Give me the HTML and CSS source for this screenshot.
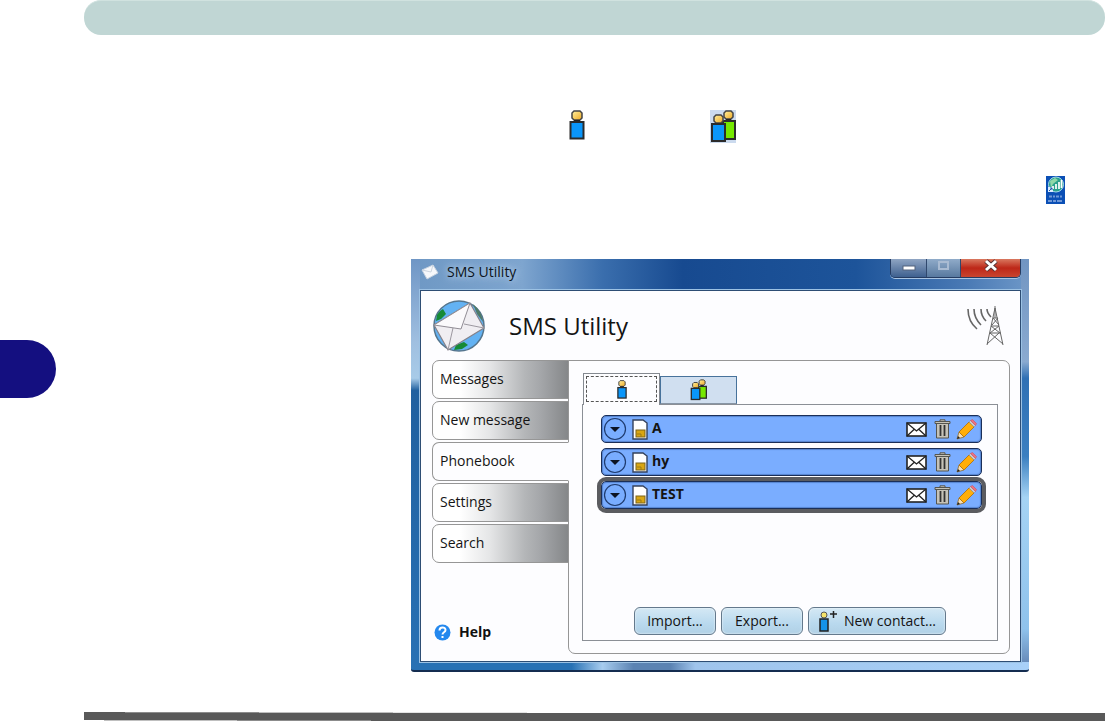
FILE: index.html
```html
<!DOCTYPE html>
<html lang="en">
<head>
<meta charset="utf-8">
<title>SMS Utility</title>
<link rel="stylesheet" href="styles.css">
</head>
<body>
<svg class="defs" aria-hidden="true">
  <defs>
    <linearGradient id="gold" x1="0" y1="0" x2="1" y2="1"><stop offset="0" stop-color="#fff0a0"/><stop offset="1" stop-color="#efa922"/></linearGradient>
    <symbol id="person" viewBox="0 0 16 30">
      <path d="M5 1h6l2 2v5l-2 2H5L3 8V3z" fill="url(#gold)" stroke="#444" stroke-width="1.5"/>
      <path d="M5 10h6v2H5z" fill="#222"/>
      <rect x="1.5" y="12" width="13" height="16.5" fill="#0a96fa" stroke="#2b2b2b" stroke-width="2"/>
    </symbol>
    <symbol id="people" viewBox="0 0 26 33">
      <path d="M16 1h5l2 2v4l-2 2h-5l-2-2V3z" fill="url(#gold)" stroke="#444" stroke-width="1.5"/>
      <path d="M16 9h5v2h-5z" fill="#222"/>
      <rect x="13" y="11" width="12" height="18" fill="#75e800" stroke="#2b2b2b" stroke-width="2"/>
      <path d="M6 5h5l2 2v4l-2 2H6l-2-2V7z" fill="url(#gold)" stroke="#444" stroke-width="1.5"/>
      <rect x="2" y="14" width="13" height="17" fill="#0a96fa" stroke="#2b2b2b" stroke-width="2"/>
    </symbol>
    <symbol id="card" viewBox="0 0 16 21">
      <path d="M1 1h10l4 3v16H1z" fill="#fff" stroke="#34415c" stroke-width="1.4"/>
      <rect x="4" y="11" width="9" height="7" fill="#d9a613" stroke="#7c641c"/>
      <path d="M5 15h4v3" fill="none" stroke="#9c7a16"/>
    </symbol>
    <symbol id="mail" viewBox="0 0 21 15">
      <rect x="1" y="1" width="19" height="13" fill="#fff" stroke="#222" stroke-width="1.6"/>
      <path d="M1 1l9.500 8L20 1M1 14l7-6.500M20 14l-7-6.500" fill="none" stroke="#222" stroke-width="1.300"/>
    </symbol>
    <symbol id="trash" viewBox="0 0 17 20">
      <path d="M2.500 4.500h12V19h-12z" fill="#c6c3b8" stroke="#55554f"/>
      <path d="M1 2.500h15v2H1zM6 .8h5v1.700H6z" fill="#c6c3b8" stroke="#55554f"/>
      <path d="M6.500 6v11M10.500 6v11" stroke="#333" stroke-width="1.800"/>
    </symbol>
    <symbol id="pencil" viewBox="0 0 21 21">
      <path d="M1 20l2-7 5 5z" fill="#f7dfb5" stroke="#8a672c" stroke-width=".8"/>
      <path d="M1 20l1-3 2 2z" fill="#222"/>
      <path d="M3 13L13 3l5 5L8 18z" fill="#ffae0a" stroke="#b37410" stroke-width=".9"/>
      <path d="M13 3l1.500-1.500 5 5L18 8z" fill="#ccc" stroke="#888" stroke-width=".5"/>
      <path d="M14.500 1.500l2-1 4 4-1 2z" fill="#ef7180" stroke="#c95565" stroke-width=".6"/>
    </symbol>
    <symbol id="arrow" viewBox="0 0 24 24">
      <circle cx="12" cy="12" r="10.500" fill="#79adff" stroke="#1f3c70" stroke-width="1.200"/>
      <path d="M7 10h10l-5 5z" fill="#0c1424"/>
    </symbol>
  </defs>
</svg>
<div class="page">
  <aside class="margin"><div class="chapter"></div></aside>
  <main class="content">
    <div class="banner"></div>
    <div class="legend">
      <svg class="one" role="img" aria-label="Contact"><use href="#person"/></svg>
      <svg class="many" role="img" aria-label="Group"><use href="#people"/></svg>
    </div>
    <div class="shortcut">
      <svg width="19" height="28" viewBox="0 0 19 28" role="img" aria-label="Wireless Manager">
        <rect width="19" height="28" fill="#0b4fb5"/>
        <circle cx="10" cy="8.500" r="7.500" fill="#2aa08c" stroke="#a8dcec"/>
        <path d="M4 5l5-3 3 2-5 4-2 4z" fill="#8fd8a8"/>
        <path d="M7 13v-3M10 13V8M13 13V6M15.500 12V4" stroke="#fff" stroke-width="1.700"/>
        <path d="M2 11h5v5H2z" fill="#dcecff"/><path d="M3 15l3-3M4 12h2v2" stroke="#2358a8" fill="none"/>
        <path d="M3 20.500h3m1 0h2m1 0h3m1 0h2M2 25h4m1 0h3m1 0h5" stroke="#6f97d6" stroke-width="2"/>
      </svg>
    </div>
    <section class="window">
      <header class="titlebar">
        <svg width="18" height="16" viewBox="0 0 18 16" aria-hidden="true"><path d="M1 6l11-5 5 8-11 6z" fill="#f6f8fb" stroke="#c5d2e0"/><path d="M1 6l9 2 2-7" fill="none" stroke="#ccd5df"/></svg>
        <span class="caption">SMS Utility</span>
        <div class="controls">
          <button class="ctl" aria-label="Minimize"><svg width="16" height="16" viewBox="0 0 16 16"><rect x="2" y="7" width="12" height="4" fill="#fff" stroke="#53637c"/></svg></button>
          <button class="ctl max" aria-label="Maximize" disabled><svg width="16" height="16" viewBox="0 0 16 16"><rect x="3" y="3" width="9" height="7" fill="none" stroke="#a9bbd2" stroke-width="2"/></svg></button>
          <button class="ctl close" aria-label="Close"><svg width="16" height="16" viewBox="0 0 16 16"><path d="M3 2l10 9M13 2L3 11" stroke="#5b3535" stroke-width="5"/><path d="M3 2l10 9M13 2L3 11" stroke="#fff" stroke-width="3"/></svg></button>
        </div>
      </header>
      <div class="client">
        <div class="brand">
          <svg width="54" height="54" viewBox="0 0 54 54" aria-hidden="true">
            <circle cx="27" cy="27" r="25" fill="#63b2f3" stroke="#55758d" stroke-width="1.500"/>
            <path d="M5 16c2-3 4-5 6-6l3 5-5 5-5 2zM24 46l8-3 4 3-6 4-8 1z" fill="#168a36"/>
            <path d="M41 5c6 5 9 11 10 18l-6-8z" fill="#4f7a68"/>
            <path d="M2 26L38 4l14 25L16 51z" fill="#f0eef2" stroke="#858189" stroke-width="1.200"/>
            <path d="M16 51l5-22M52 29l-20-4" fill="none" stroke="#9c98a0"/>
            <path d="M2 26l27 4L38 4z" fill="#fbfafc" stroke="#918d95"/>
          </svg>
          <h1>SMS Utility</h1>
          <svg width="38" height="40" viewBox="0 0 38 40" fill="none" stroke="#666" aria-hidden="true">
            <path d="M28 2L20 39M28 2l8 37M26 12h5M24 20l8 0M23 27h11M20 38l12-11M36 38L23 27M23 27l9-7M33 27l-9-7M25 19l6-7M32 19l-6-7M28 0v12"/>
            <path d="M1 3c0 8 3 15 9 20M7 3c0 6 2 11 7 16M14 3c0 5 1 8 5 12M20 3c0 3 1 5 4 8" stroke-width="1.600"/>
          </svg>
        </div>
        <div class="body">
          <nav class="side">
            <button class="item">Messages</button>
            <button class="item">New message</button>
            <button class="item current">Phonebook</button>
            <button class="item">Settings</button>
            <button class="item">Search</button>
            <a class="help" href="#help">
              <svg width="17" height="17" viewBox="0 0 17 17" aria-hidden="true"><circle cx="8.500" cy="8.500" r="8" fill="#2488ee"/><path d="M5.500 6.500c0-4 6-4 6-.5 0 2.500-3 2-3 4.500M8.500 12v2" fill="none" stroke="#fff" stroke-width="2"/></svg>
              Help</a>
          </nav>
          <div class="panel">
            <div class="tabs" role="tablist">
              <button class="tab active" role="tab" aria-selected="true" aria-label="Contacts"><svg class="t-one"><use href="#person"/></svg></button>
              <button class="tab" role="tab" aria-selected="false" aria-label="Groups"><svg class="t-many"><use href="#people"/></svg></button>
            </div>
            <div class="sheet">
              <ul class="contacts">
                <li class="row"><button aria-label="Expand A"><svg class="arrow"><use href="#arrow"/></svg></button><svg class="card"><use href="#card"/></svg><span class="name">A</span><button aria-label="Message"><svg class="mail"><use href="#mail"/></svg></button><button aria-label="Delete"><svg class="trash"><use href="#trash"/></svg></button><button aria-label="Edit"><svg class="pencil"><use href="#pencil"/></svg></button></li>
                <li class="row"><button aria-label="Expand hy"><svg class="arrow"><use href="#arrow"/></svg></button><svg class="card"><use href="#card"/></svg><span class="name">hy</span><button aria-label="Message"><svg class="mail"><use href="#mail"/></svg></button><button aria-label="Delete"><svg class="trash"><use href="#trash"/></svg></button><button aria-label="Edit"><svg class="pencil"><use href="#pencil"/></svg></button></li>
                <li class="row selected"><button aria-label="Expand TEST"><svg class="arrow"><use href="#arrow"/></svg></button><svg class="card"><use href="#card"/></svg><span class="name">TEST</span><button aria-label="Message"><svg class="mail"><use href="#mail"/></svg></button><button aria-label="Delete"><svg class="trash"><use href="#trash"/></svg></button><button aria-label="Edit"><svg class="pencil"><use href="#pencil"/></svg></button></li>
              </ul>
              <div class="actions">
                <button class="btn">Import...</button>
                <button class="btn">Export...</button>
                <button class="btn new"><svg width="20" height="22" viewBox="0 0 20 22" aria-hidden="true"><circle cx="6" cy="5" r="3" fill="#f5e36a" stroke="#555"/><rect x="2" y="9" width="8" height="12" fill="#1593e8" stroke="#222" stroke-width="1.500"/><path d="M12 4h7M15.500 1v7" stroke="#222" stroke-width="1.500"/></svg>New contact...</button>
              </div>
            </div>
          </div>
        </div>
      </div>
    </section>
    <svg class="rule" viewBox="0 0 1021 10" preserveAspectRatio="none" aria-hidden="true">
      <path d="M0 0h41v2H0zM0 1h1021v7H0z" fill="#595959"/>
      <path d="M41 0h134v1H41zM153 8h134v1H153z" fill="#8c8c8c"/>
      <path d="M175 0h134v1H175zM20 8h133v1H20z" fill="#bfbfbf"/>
      <path d="M309 0h134v1H309zM421 9h600v1H421z" fill="#e4e4e4"/>
      <path d="M287 8h734v1H287z" fill="#595959"/>
    </svg>
  </main>
</div>
</body>
</html>
```
FILE: styles.css
```css
* { box-sizing: border-box; }
body { margin: 0; background: #fff; color: #141414; font: 14px/20px "Open Sans", "Noto Sans", sans-serif; }
button { font: inherit; color: inherit; margin: 0; padding: 0; border: 0; background: none; }
svg { display: block; flex: none; }
.defs { position: absolute; width: 0; height: 0; }

.page { display: flex; min-height: 100vh; }
.margin { width: 84px; flex: none; padding-top: 340px; }
.chapter { width: 56px; height: 58px; background: #140f80; border-radius: 0 29px 29px 0; }
.content { flex: 1; display: flex; flex-direction: column; padding-right: 1px; }
.banner { height: 35px; border-radius: 17px; background: #c0d6d4; border-top: 1px solid #d0e2df; }

.legend { display: flex; gap: 124px; padding: 75px 0 0 484px; }
.one { width: 18px; height: 30px; }
.many { width: 26px; height: 33px; background: #cbdaee; }
.shortcut { display: flex; justify-content: flex-end; padding: 33px 40px 0 0; }

.window {
  margin: 55px 76px 0 327px; padding: 0 8px 8px 9px;
  border-radius: 0 0 3px 3px;
  border-bottom: 2px solid #142c50;
  background:
    linear-gradient(90deg, transparent 26%, #a7ccef 31%, #5b83b3 36%, #5b83b3 42%, #9fc4ec 46%, #a8d0f8 100%) bottom / 100% 8px no-repeat,
    linear-gradient(#7195c2, #8aaad0 25%, #2f70b4 29%, #3b7fc0 48%, #a5d3f4 58%, #8fc2ec 90%, #5f7fae) right / 8px 100% no-repeat,
    linear-gradient(#6f96c5, #9fbfe0 20%, #a8cbe8 29%, #20609f 32%, #2871b4) left / 9px 100% no-repeat,
    linear-gradient(90deg, #6e98c4, #7ea5cf 18%, #3a6ead 31%, #174a90 44%, #1d549a 72%, #4a7ab5 90%, #6e98c8) top / 100% 31px no-repeat,
    #2871b4;
}
.titlebar { display: flex; align-items: center; height: 31px; padding-left: 1px; }
.caption { flex: 1; padding: 0 0 5px 8px; color: #0c1420; text-shadow: 0 0 6px #bcd3ec, 0 0 10px #bcd3ec; }
.titlebar > svg { margin-bottom: 5px; }
.controls { display: flex; align-self: flex-start; height: 19px; border: 1px solid #253c62; border-top: 0; border-radius: 0 0 5px 5px; overflow: hidden; box-shadow: 0 1px 0 #a9c4e2; }
.ctl { width: 36px; display: flex; justify-content: center; background: linear-gradient(#8fa5c3, #3e608f); border-right: 1px solid #30486d; }
.ctl.max { width: 34px; background: linear-gradient(#90abc9, #58799f); }
.ctl.close { width: 59px; border: 0; background: linear-gradient(#d9785f, #bd2718 50%, #c8452f); }

.client { border: 1px solid #2d4d74; background: #fdfdff; box-shadow: 0 0 0 1px #9cc2e4; padding: 0 10px 7px 11px; }
.brand { display: flex; align-items: center; height: 69px; padding-right: 5px; }
.brand h1 { flex: 1; margin: 0; padding: 0 0 0 23px; font-size: 24px; line-height: 32px; font-weight: 400; }

.body { display: flex; }
.side { width: 137px; flex: none; display: flex; flex-direction: column; gap: 2px; }
.item {
  height: 39px; padding: 0 0 2px 7px; text-align: left;
  border: 1px solid #969696; border-radius: 7px 0 0 7px;
  background: linear-gradient(90deg, #fff 20%, #e5e6e7 42%, #b4b6b8 68%, #a4a6a9 80%, #858789);
}
.item.current { background: #fdfdff; border-right-color: #fdfdff; position: relative; }
.help { display: flex; align-items: center; gap: 8px; margin: 57px 0 12px; padding-left: 2px; font-size: 14px; font-weight: 700; color: #111; text-decoration: none; }
.panel { flex: 1; margin-left: -1px; padding: 12px 11px 12px 13px; border: 1px solid #969696; border-radius: 0 7px 7px 7px; display: flex; flex-direction: column; }
.tabs { display: flex; align-items: flex-end; padding-left: 1px; height: 31px; }
.tab { width: 77px; height: 28px; display: flex; align-items: center; justify-content: center; border: 1px solid #47729b; border-bottom-color: #8795a5; background: #d0dff0; }
.tab.active { height: 32px; margin-bottom: -1px; border: 1px solid #848990; border-bottom: 0; background: #fdfdff; outline: 1px dashed #555; outline-offset: -4px; position: relative; }
.t-one { width: 12px; height: 19px; }
.t-many { width: 17px; height: 22px; }
.sheet { flex: 1; display: flex; flex-direction: column; border: 1px solid #8b8f96; padding: 10px 15px 5px 18px; }
.contacts { list-style: none; margin: 0; padding: 0; display: flex; flex-direction: column; gap: 5px; }
.row { display: flex; align-items: center; height: 28px; padding: 0 4px 0 1px; border: 1px solid #1b2f58; border-radius: 5px; background: #7aadff; box-shadow: inset 0 0 1px 1px #5583cf; }
.row.selected { outline: 4px solid #5b5c60; }
.arrow { width: 24px; height: 24px; }
.card { width: 16px; height: 21px; margin: 0 4px 0 5px; }
.name { flex: 1; font-size: 14px; font-weight: 700; padding-bottom: 2px; }
.mail { width: 21px; height: 15px; margin-right: 7px; }
.trash { width: 17px; height: 20px; margin-right: 5px; }
.pencil { width: 21px; height: 21px; }
.actions { display: flex; justify-content: flex-end; gap: 5px; margin-top: auto; padding-right: 36px; }
.btn { width: 82px; height: 28px; border: 1px solid #64798c; border-radius: 6px; background: linear-gradient(#d4e8f4, #b9d9ee 60%, #b0d0e5); display: flex; align-items: center; justify-content: center; box-shadow: inset 0 0 2px #fff; }
.btn.new { width: 138px; gap: 6px; }
.rule { width: 100%; height: 10px; margin-top: 40px; }
```
